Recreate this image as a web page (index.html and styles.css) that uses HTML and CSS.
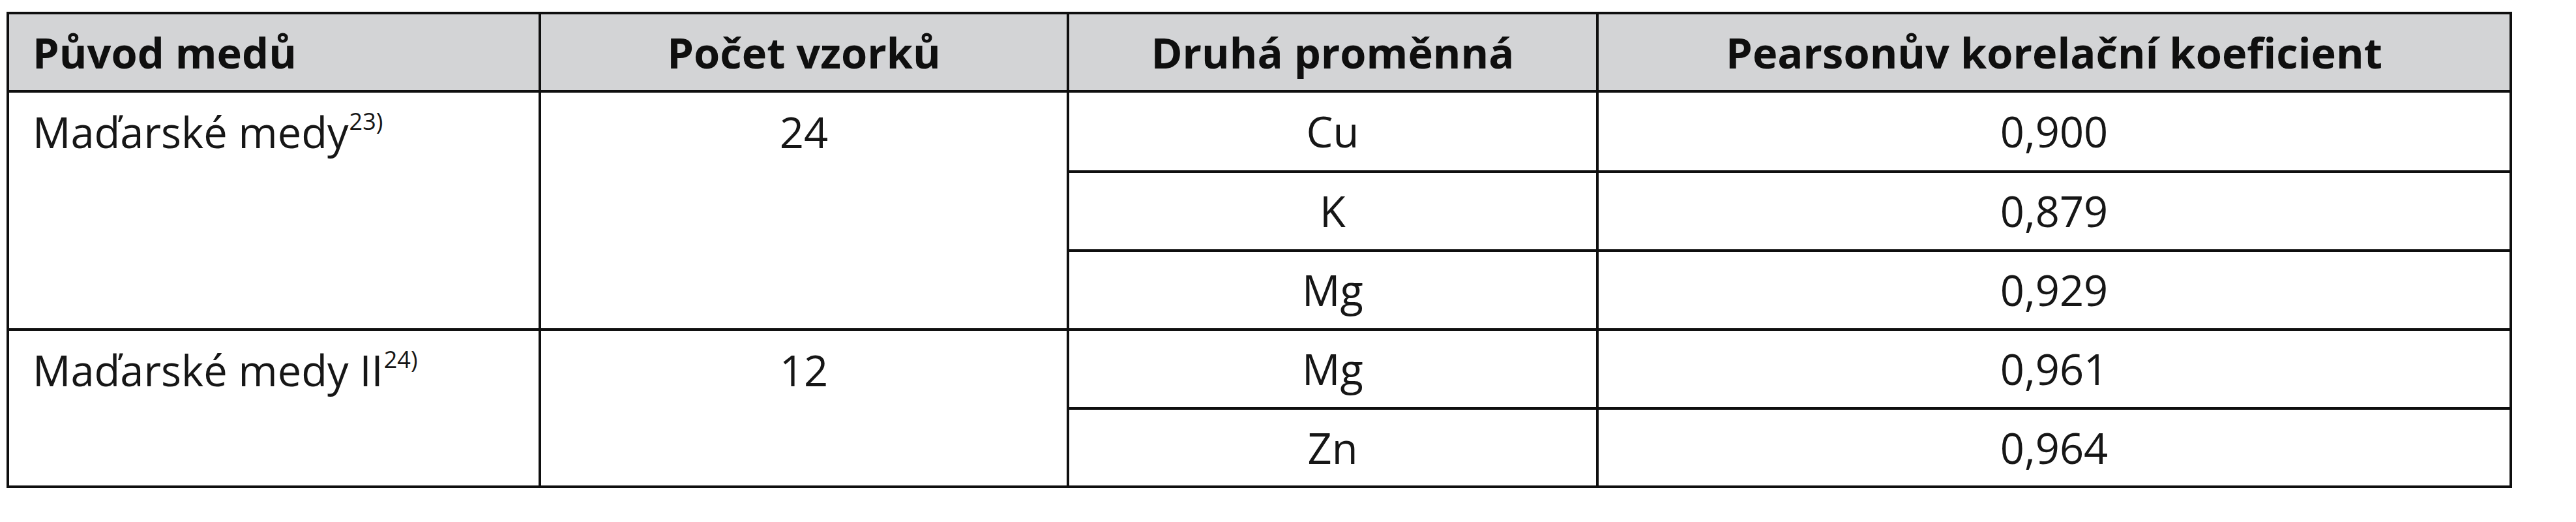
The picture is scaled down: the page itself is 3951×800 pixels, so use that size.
FILE: index.html
```html
<!DOCTYPE html>
<html lang="cs">
<head>
<meta charset="utf-8">
<title>Korelace</title>
<link rel="stylesheet" href="styles.css">
</head>
<body>
<table class="data">
  <colgroup>
    <col class="c1"><col class="c2"><col class="c3"><col class="c4">
  </colgroup>
  <thead>
    <tr class="head">
      <th class="left">Původ medů</th>
      <th>Počet vzorků</th>
      <th>Druhá proměnná</th>
      <th>Pearsonův korelační koeficient</th>
    </tr>
  </thead>
  <tbody>
    <tr class="r1">
      <td class="left top" rowspan="3">Maďarské medy<sup class="ref">23)</sup></td>
      <td class="top" rowspan="3">24</td>
      <td>Cu</td>
      <td>0,900</td>
    </tr>
    <tr class="r2">
      <td>K</td>
      <td>0,879</td>
    </tr>
    <tr class="r3">
      <td>Mg</td>
      <td>0,929</td>
    </tr>
    <tr class="r4">
      <td class="left top" rowspan="2">Maďarské medy II<sup class="ref">24)</sup></td>
      <td class="top" rowspan="2">12</td>
      <td>Mg</td>
      <td>0,961</td>
    </tr>
    <tr class="r5">
      <td>Zn</td>
      <td>0,964</td>
    </tr>
  </tbody>
</table>
</body>
</html>
```

FILE: styles.css
```css
html, body {
  margin: 0;
  padding: 0;
  background: #ffffff;
}

body {
  padding: 18px 0 0 10px;
  font-family: "Open Sans", "Noto Sans", "Liberation Sans", sans-serif;
  color: #161616;
}

.data {
  border-collapse: collapse;
  table-layout: fixed;
  width: 3839px;
  font-size: 65px;
}

.c1 { width: 816px; }
.c2 { width: 810px; }
.c3 { width: 812px; }
.c4 { width: 1401px; }

.data th,
.data td {
  border: 4px solid #0f0f0f;
  padding: 0 36px;
  text-align: center;
  vertical-align: middle;
  line-height: 1.362;
}

.data th {
  background: #d3d4d6;
  font-weight: 700;
  color: #0f0f0f;
}

.data td {
  font-weight: 400;
}

.data .left {
  text-align: left;
}

.data .top {
  vertical-align: top;
  padding-top: 16px;
}

.head { height: 120px; }
.r1 { height: 123px; }
.r2 { height: 121px; }
.r3 { height: 121px; }
.r4 { height: 121px; }
.r5 { height: 120px; }

.ref {
  font-size: 36px;
  line-height: 1;
  vertical-align: 28px;
  margin-left: 1px;
}
```
